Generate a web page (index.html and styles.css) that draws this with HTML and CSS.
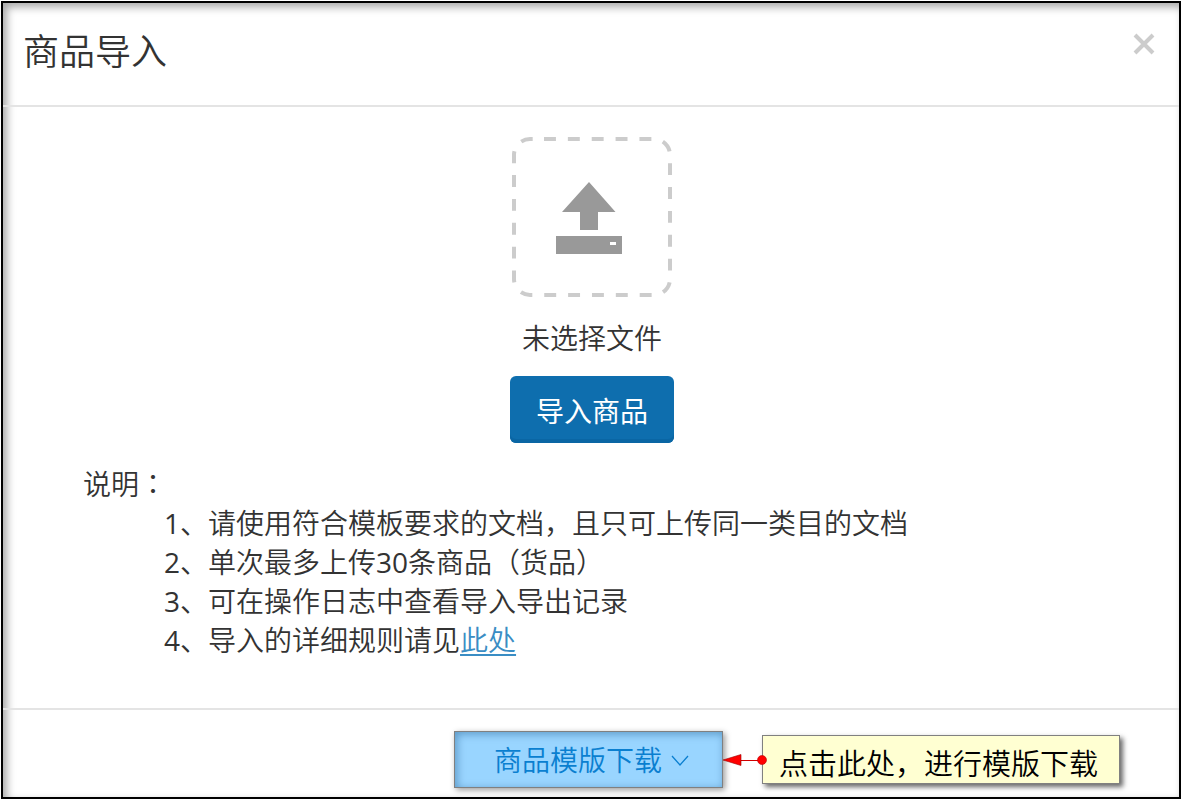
FILE: index.html
```html
<!DOCTYPE html>
<html lang="zh-CN">
<head>
    <meta charset="UTF-8">
    <meta name="viewport" content="width=device-width, initial-scale=1.0">
    <title>商品导入</title>
    <link rel="stylesheet" href="styles.css">
</head>
<body>

<div class="dialog" role="dialog" aria-labelledby="dialog-title">
    <header class="dialog-header">
        <h1 id="dialog-title">商品导入</h1>
        <button type="button" class="close" aria-label="关闭">
            <svg width="22" height="22" viewBox="0 0 22 22"><path d="M2 2L20 20M20 2L2 20" stroke="#ccc" stroke-width="4"/></svg>
        </button>
    </header>

    <main class="dialog-body">
        <svg class="drop-zone" width="160" height="160" viewBox="0 0 160 160">
            <path d="M32 2H142A16 16 0 0 1 158 18V142A16 16 0 0 1 142 158H18A16 16 0 0 1 2 142V18A16 16 0 0 1 18 2Z" fill="none" stroke="#ccc" stroke-width="4" stroke-dasharray="11.93 11.93"/>
            <path d="M77 45L103.500 75H86V93H68V75H50Z" fill="#999"/>
            <path d="M44 99H110V117H44ZM98 105V108H104V105Z" fill="#999" fill-rule="evenodd"/>
        </svg>
        <p class="file-name">未选择文件</p>
        <button type="button" class="btn-import">导入商品</button>

        <div class="notes">
            <p>说明<span class="colon" lang="zh-TW">：</span></p>
            <ul>
                <li><span class="num">1</span>、请使用符合模板要求的文档，且只可上传同一类目的文档</li>
                <li><span class="num">2</span>、单次最多上传<span class="num">30</span>条商品（货品）</li>
                <li><span class="num">3</span>、可在操作日志中查看导入导出记录</li>
                <li><span class="num">4</span>、导入的详细规则请见<a href="#">此处</a></li>
            </ul>
        </div>
    </main>

    <footer class="dialog-footer">
        <button type="button" class="btn-template">
            商品模版下载
            <svg width="18" height="12" viewBox="0 0 18 12"><path d="M1 1L9 10L17 1" fill="none" stroke="#0a7fd0" stroke-width="1.3"/></svg>
        </button>
        <div class="hint">
            <svg class="hint-arrow" width="44" height="16" viewBox="0 0 44 16">
                <path d="M18 8.500H39" stroke="#d00000"/>
                <path d="M0 8L18 2.500V13.500Z" fill="#f00" stroke="#900" stroke-width=".6"/>
                <circle cx="39" cy="8" r="4.500" fill="#f00" stroke="#b00" stroke-width=".6"/>
            </svg>
            <div class="hint-text">点击此处，进行模版下载</div>
        </div>
    </footer>
</div>

</body>
</html>
```
FILE: styles.css
```css
* { box-sizing: border-box; }
body {
    margin: 1px 10px 10px 1px;
    background: #fff;
    color: #333;
    font-family: "Open Sans", "Noto Sans CJK SC", sans-serif;
    font-size: 28px;
    font-weight: 350;
    line-height: 39px;
}
h1, p, ul { margin: 0; padding: 0; }
ul { list-style: none; }
svg { display: block; }
button { font: inherit; border: none; cursor: pointer; }

.dialog {
    border: 2px solid #000;
    box-shadow: 4px 4px 6px rgba(0,0,0,0.3), inset 4px 4px 8px rgba(0,0,0,0.35);
}

.dialog-header {
    display: flex;
    justify-content: space-between;
    align-items: flex-start;
    padding: 22px 24px 26px 20px;
    border-bottom: 2px solid #e4e4e4;
}
.dialog-header h1 { font-size: 36px; font-weight: 350; line-height: 54px; }
.close { background: none; padding: 0; margin-top: 8px; }

.dialog-body {
    display: flex;
    flex-direction: column;
    align-items: center;
    padding: 30px 0 48px 2px;
}
.file-name { margin-top: 22px; }
.btn-import {
    margin-top: 18px;
    padding: 16px 26px 12px;
    background: #0e6eae;
    color: #fff;
    font-weight: 400;
    border-radius: 6px;
    box-shadow: inset 0 -4px 0 #0a66a4;
}
.notes { align-self: stretch; margin-top: 22px; padding-left: 78px; }
.notes ul { padding-left: 81px; }
.notes a { color: #3a8dc4; text-underline-offset: 3px; }
.colon { font-family: "Noto Sans CJK TC", sans-serif; line-height: 1; }
.num { font-weight: 400; }

.dialog-footer {
    display: grid;
    grid-template-columns: 1fr auto 1fr;
    align-items: center;
    padding: 21px 5px 9px 0;
    border-top: 2px solid #e4e4e4;
}
.btn-template {
    grid-column: 2;
    display: flex;
    align-items: center;
    gap: 9px;
    padding: 9px 33px 7px 39px;
    border: 1px solid #808080;
    background: #99d5ff;
    color: #0a7fd0;
    box-shadow: 2px 2px 6px rgba(0,0,0,0.4), inset 2px 2px 8px rgba(0,60,110,0.4);
}

/* callout with the arrow pointing back at the download button */
.hint { display: flex; align-items: center; }
.hint-arrow { position: relative; z-index: 1; flex: none; margin-right: -5px; }
.hint-text {
    padding: 8px 21px 0 16px;
    border: 1px solid #808080;
    background: #ffffd2;
    color: #000;
    font-size: 29px;
    line-height: 39px;
    white-space: nowrap;
    box-shadow: 3px 3px 5px rgba(0,0,0,0.6);
}
```
